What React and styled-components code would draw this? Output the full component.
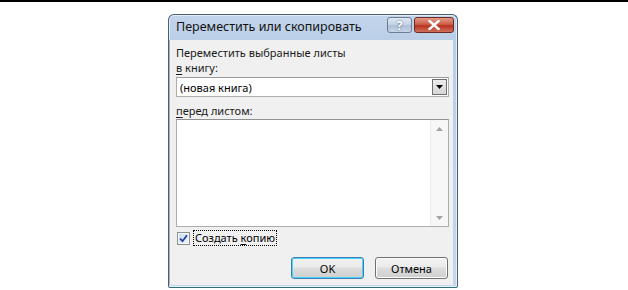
import React from "react";
import styled, { createGlobalStyle } from "styled-components";

const GlobalStyle = createGlobalStyle`
  html, body {
    margin: 0;
    padding: 0;
    background: #ffffff;
  }
  body {
    font-family: "Noto Sans", "Open Sans", Arial, sans-serif;
    font-size: 11px;
    color: #000;
  }
`;

function App() {
  return (
    <>
      <GlobalStyle />
      <Page>
        <TopRule />
        <Window>
          <TitleBar>
            <Title>Переместить или скопировать</Title>
            <Controls>
              <CaptionButton variant="help">?</CaptionButton>
              <CaptionButton variant="close">
                <svg width="12" height="10" viewBox="0 0 12 10">
                  <path
                    d="M1.5 1 L10.5 9 M10.5 1 L1.5 9"
                    stroke="#fff"
                    strokeWidth="2.4"
                    strokeLinecap="square"
                  />
                </svg>
              </CaptionButton>
            </Controls>
          </TitleBar>
          <Client>
            <Label>Переместить выбранные листы</Label>
            <Label>
              <u>в</u> книгу:
            </Label>
            <Combo>
              <ComboText>(новая книга)</ComboText>
              <DropButton>
                <svg width="7" height="4" viewBox="0 0 7 4">
                  <path d="M0 0 H7 L3.5 4 Z" fill="#000" />
                </svg>
              </DropButton>
            </Combo>
            <Label gap={6}>
              <u>п</u>еред листом:
            </Label>
            <ListBox>
              <ListArea />
              <ScrollBar>
                <ScrollArrow>
                  <svg width="7" height="4" viewBox="0 0 7 4">
                    <path d="M0 4 H7 L3.5 0 Z" fill="#a3a3a3" />
                  </svg>
                </ScrollArrow>
                <ScrollArrow>
                  <svg width="7" height="4" viewBox="0 0 7 4">
                    <path d="M0 0 H7 L3.5 4 Z" fill="#a3a3a3" />
                  </svg>
                </ScrollArrow>
              </ScrollBar>
            </ListBox>
            <CheckRow>
              <CheckBox>
                <svg width="9" height="9" viewBox="0 0 9 9">
                  <path
                    d="M1 4.5 L3.5 7.2 L8 1.2"
                    fill="none"
                    stroke="#21409a"
                    strokeWidth="1.8"
                  />
                </svg>
              </CheckBox>
              <CheckLabel>
                Создать <u>к</u>опию
              </CheckLabel>
            </CheckRow>
            <ButtonRow>
              <Button isDefault>OK</Button>
              <Button>Отмена</Button>
            </ButtonRow>
          </Client>
        </Window>
      </Page>
    </>
  );
}

export default App;

const Page = styled.div`
  width: 628px;
  height: 290px;
  overflow: hidden;
`;
const TopRule = styled.div`
  height: 2px;
  background: #000;
`;
const Window = styled.div`
  width: 288px;
  height: 272px;
  margin: 12px 0 0 168px;
  border: 1px solid #4b5d70;
  border-bottom-color: #2e6f78;
  border-radius: 6px 6px 2px 2px;
  background: linear-gradient(#c2d4ea, #b9cfe7 30px, #c4d6eb);
  display: flex;
  flex-direction: column;
  box-shadow: inset 0 0 0 1px rgba(255, 255, 255, 0.6);
`;
const TitleBar = styled.div`
  height: 25px;
  display: flex;
  align-items: flex-start;
  justify-content: space-between;
  padding: 0 3px 0 7px;
`;
const Title = styled.div`
  font-size: 12.5px;
  line-height: 24px;
  color: #111;
`;
const Controls = styled.div`
  display: flex;
  gap: 2px;
  margin-top: 2px;
`;
const CaptionButton = styled.div`
  width: ${(p) => (p.variant === "close" ? "40px" : "25px")};
  height: 16px;
  box-sizing: border-box;
  border: 1px solid ${(p) => (p.variant === "close" ? "#6e2b24" : "#6d7e94")};
  border-radius: 3px;
  display: flex;
  align-items: center;
  justify-content: center;
  font-weight: bold;
  font-size: 12px;
  color: #fff;
  text-shadow: 0 0 2px #41556e;
  background: ${(p) =>
    p.variant === "close"
      ? "linear-gradient(#e29a86, #cc5f48 45%, #b9331f 55%, #d0705a)"
      : "linear-gradient(#dfe8f3, #c5d4e6 45%, #aebfd6 55%, #c6d6e9)"};
`;
const Client = styled.div`
  flex: 1;
  margin: 0 4px 2px 0;
  background: #f0f0f0;
  border-left: 1px solid #a7b2be;
  padding: 5px 4px 0 6px;
  display: flex;
  flex-direction: column;
`;
const Label = styled.div`
  font-size: 11px;
  line-height: 15px;
  color: #1a1a1a;
  margin-top: ${(p) => p.gap || 0}px;
  u {
    text-underline-offset: 2px;
  }
`;
const Combo = styled.div`
  height: 20px;
  margin-top: 2px;
  box-sizing: border-box;
  border: 1px solid #abadb3;
  border-top-color: #9a9ca1;
  background: #fff;
  display: flex;
  align-items: center;
  justify-content: space-between;
  padding: 0 1px 0 3px;
`;
const ComboText = styled.span`
  font-size: 11px;
`;
const DropButton = styled.div`
  width: 15px;
  height: 16px;
  box-sizing: border-box;
  border: 1px solid #707070;
  background: linear-gradient(#ececec, #d6d6d6);
  display: flex;
  align-items: center;
  justify-content: center;
`;
const ListBox = styled.div`
  height: 108px;
  margin-top: 1px;
  box-sizing: border-box;
  border: 1px solid #abadb3;
  border-top-color: #8e8f8f;
  background: #fff;
  display: flex;
`;
const ListArea = styled.div`
  flex: 1;
`;
const ScrollBar = styled.div`
  width: 17px;
  background: #f7f7f7;
  border-left: 1px solid #ececec;
  display: flex;
  flex-direction: column;
  justify-content: space-between;
`;
const ScrollArrow = styled.div`
  height: 17px;
  display: flex;
  align-items: center;
  justify-content: center;
`;
const CheckRow = styled.div`
  display: flex;
  align-items: center;
  gap: 3px;
  margin-top: 3px;
  padding-left: 1px;
`;
const CheckBox = styled.div`
  width: 13px;
  height: 13px;
  box-sizing: border-box;
  border: 1px solid #8e8f8f;
  background: linear-gradient(135deg, #c9dcf2, #eef4fb);
  box-shadow: inset 0 0 0 1px #f4f7fb;
  display: flex;
  align-items: center;
  justify-content: center;
`;
const CheckLabel = styled.span`
  font-size: 11px;
  line-height: 14px;
  padding: 0 1px;
  border: 1px dotted #000;
  u {
    text-underline-offset: 2px;
  }
`;
const ButtonRow = styled.div`
  display: flex;
  justify-content: flex-end;
  gap: 11px;
  margin-top: 11px;
  padding-right: 1px;
`;
const Button = styled.div`
  width: 73px;
  height: 22px;
  box-sizing: border-box;
  border: 1px solid ${(p) => (p.isDefault ? "#3c7fb1" : "#707070")};
  border-radius: 3px;
  background: linear-gradient(#f2f2f2, #ebebeb 45%, #dddddd 50%, #cfcfcf);
  box-shadow: ${(p) =>
    p.isDefault ? "inset 0 0 0 1px #48d1fb" : "inset 0 0 0 1px #fcfcfc"};
  display: flex;
  align-items: center;
  justify-content: center;
  font-size: 11px;
  color: #000;
`;
